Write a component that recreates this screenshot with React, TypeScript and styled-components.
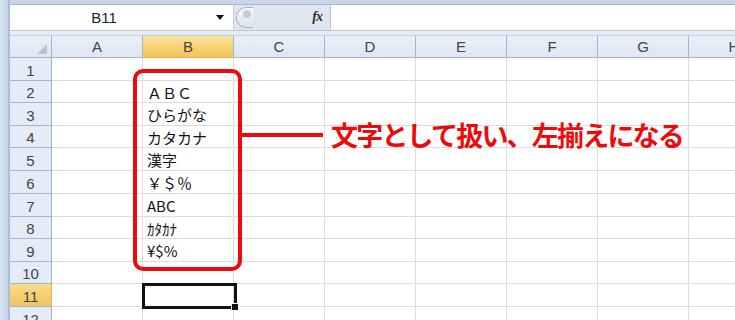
import React from 'react';
import styled, { createGlobalStyle, css } from 'styled-components';

const GlobalStyle = createGlobalStyle`
  html, body {
    margin: 0;
    padding: 0;
    background: #fff;
    overflow: hidden;
  }
  body {
    font-family: "Noto Sans CJK JP", "Liberation Sans", sans-serif;
  }
`;

const Window = styled.div`
  display: flex;
  width: 735px;
  height: 320px;
  overflow: hidden;
  background: #fff;
`;

const LeftFrame = styled.div`
  width: 8px;
  flex: none;
  background: linear-gradient(90deg, #d7e3f1, #c3d3e7);
  border-right: 2px solid #a9bed7;
`;

const Main = styled.div`
  flex: 1;
  display: flex;
  flex-direction: column;
  min-width: 0;
`;

const TopStrip = styled.div`
  height: 4px;
  background: #c9d6e7;
  border-bottom: 1px solid #a7b9cf;
`;

const FormulaBar = styled.div`
  height: 25px;
  display: flex;
  background: #fff;
`;

const NameBox = styled.div`
  width: 223px;
  display: flex;
  align-items: center;
  position: relative;
  font-size: 15px;
  color: #222;
  font-family: "Liberation Sans", sans-serif;
  span {
    flex: 1;
    text-align: center;
    padding-right: 18px;
  }
`;

const DropArrow = styled.div`
  width: 0;
  height: 0;
  border-left: 4px solid transparent;
  border-right: 4px solid transparent;
  border-top: 5px solid #111;
  margin-right: 9px;
`;

const FxArea = styled.div`
  width: 98px;
  display: flex;
  align-items: center;
  justify-content: space-between;
  background: #dfe6ef;
  border-left: 1px solid #c8d2de;
  border-right: 1px solid #b8c4d2;
  border-bottom: 1px solid #dfe6ef;
  padding-right: 8px;
  box-sizing: border-box;
`;

const Knob = styled.div`
  width: 16px;
  height: 19px;
  margin-left: 2px;
  border: 1px solid #a9b6c6;
  border-right: none;
  border-radius: 10px 0 0 10px;
  background: linear-gradient(180deg, #f4f7fb, #dde4ee);
  display: flex;
  align-items: center;
  justify-content: center;
  &::after {
    content: '';
    width: 8px;
    height: 8px;
    border-radius: 50%;
    background: #c5ccd6;
    margin-left: 4px;
    margin-top: -6px;
  }
`;

const Fx = styled.span`
  font-family: "Liberation Serif", serif;
  font-style: italic;
  font-weight: 700;
  font-size: 14px;
  color: #333;
  letter-spacing: -1px;
`;

const FormulaInput = styled.div`
  flex: 1;
  background: #fff;
`;

const Gap = styled.div`
  height: 4px;
  background: #e6ecf4;
  border-top: 1px solid #b9c7d8;
`;

const Sheet = styled.div`
  position: relative;
  flex: 1;
  overflow: hidden;
`;

const Grid = styled.div`
  display: grid;
  grid-template-columns: 42px repeat(8, 91px);
  font-size: 15px;
  color: #111;
`;

const headerBase = css`
  display: flex;
  align-items: center;
  justify-content: center;
  box-sizing: border-box;
  font-family: "Liberation Sans", sans-serif;
  font-size: 15px;
  color: #444;
`;

const ColHead = styled.div<{ $active?: boolean }>`
  ${headerBase}
  height: 23px;
  border-top: 1px solid #c3d2e3;
  border-right: 1px solid #9eb6ce;
  border-bottom: 1px solid #9eb6ce;
  background: ${(p) =>
    p.$active
      ? 'linear-gradient(180deg, #fae4a6 0%, #f6d16e 55%, #f1c25b 100%)'
      : 'linear-gradient(180deg, #e9f0f8 0%, #dde7f3 100%)'};
  ${(p) => p.$active && 'border-bottom-color: #f2b33f;'}
`;

const Corner = styled.div`
  ${headerBase}
  height: 23px;
  position: relative;
  border-top: 1px solid #c3d2e3;
  border-right: 1px solid #9eb6ce;
  border-bottom: 1px solid #9eb6ce;
  background: linear-gradient(180deg, #e9f0f8 0%, #dde7f3 100%);
  &::after {
    content: '';
    position: absolute;
    right: 4px;
    bottom: 3px;
    width: 0;
    height: 0;
    border-left: 10px solid transparent;
    border-bottom: 10px solid #b7c3d1;
  }
`;

const RowHead = styled.div<{ $active?: boolean; $h: number }>`
  ${headerBase}
  height: ${(p) => p.$h}px;
  border-right: 1px solid #9eb6ce;
  border-bottom: 1px solid #9eb6ce;
  background: ${(p) =>
    p.$active ? 'linear-gradient(180deg, #f9dc8c 0%, #f1c35d 100%)' : '#e4ecf7'};
  ${(p) => p.$active && 'border-right-color: #f2b33f;'}
  padding-top: 2px;
`;

const Cell = styled.div<{ $h: number }>`
  height: ${(p) => p.$h}px;
  box-sizing: border-box;
  border-right: 1px solid #dadcdd;
  border-bottom: 1px solid #dadcdd;
  padding: 1px 0 0 4px;
  display: flex;
  align-items: center;
  white-space: nowrap;
  font-family: "Noto Sans CJK JP", sans-serif;
  font-size: 15px;
  line-height: 1;
  color: #111;
`;

const Bracket = styled.div`
  position: absolute;
  left: 123px;
  top: 34px;
  width: 109px;
  height: 202px;
  box-sizing: border-box;
  border: 4px solid #ee0a0a;
  border-radius: 10px;
`;

const Connector = styled.div`
  position: absolute;
  left: 232px;
  top: 98px;
  width: 81px;
  height: 4px;
  background: #ee0a0a;
`;

const Callout = styled.div`
  position: absolute;
  left: 321px;
  top: 82px;
  font-family: "Noto Sans CJK JP", sans-serif;
  font-weight: 700;
  font-size: 27px;
  letter-spacing: -1.8px;
  line-height: 36px;
  color: #ee0a0a;
  white-space: nowrap;
`;

const Selection = styled.div`
  position: absolute;
  left: 132px;
  top: 248px;
  width: 95px;
  height: 26px;
  box-sizing: border-box;
  border: 3px solid #111;
  &::after {
    content: '';
    position: absolute;
    right: -5px;
    bottom: -5px;
    width: 6px;
    height: 6px;
    background: #111;
    border: 1px solid #fff;
  }
`;

const columns = ['A', 'B', 'C', 'D', 'E', 'F', 'G', 'H'];
const rowHeights = [23, 22, 23, 22, 23, 23, 23, 22, 23, 22, 23, 23];
const bValues: Record<number, string> = {
  2: 'ＡＢＣ',
  3: 'ひらがな',
  4: 'カタカナ',
  5: '漢字',
  6: '￥＄％',
  7: 'ABC',
  8: 'ｶﾀｶﾅ',
  9: '¥$%',
};

export default function App() {
  return (
    <Window>
      <GlobalStyle />
      <LeftFrame />
      <Main>
        <TopStrip />
        <FormulaBar>
          <NameBox>
            <span>B11</span>
            <DropArrow />
          </NameBox>
          <FxArea>
            <Knob />
            <Fx>fx</Fx>
          </FxArea>
          <FormulaInput />
        </FormulaBar>
        <Gap />
        <Sheet>
          <Grid>
            <Corner />
            {columns.map((c) => (
              <ColHead key={c} $active={c === 'B'}>
                {c}
              </ColHead>
            ))}
            {rowHeights.map((h, i) => {
              const row = i + 1;
              return (
                <React.Fragment key={row}>
                  <RowHead $h={h} $active={row === 11}>
                    {row}
                  </RowHead>
                  {columns.map((c) => (
                    <Cell key={c} $h={h}>
                      {c === 'B' ? bValues[row] : null}
                    </Cell>
                  ))}
                </React.Fragment>
              );
            })}
          </Grid>
          <Bracket />
          <Connector />
          <Callout>文字として扱い、左揃えになる</Callout>
          <Selection />
        </Sheet>
      </Main>
    </Window>
  );
}
